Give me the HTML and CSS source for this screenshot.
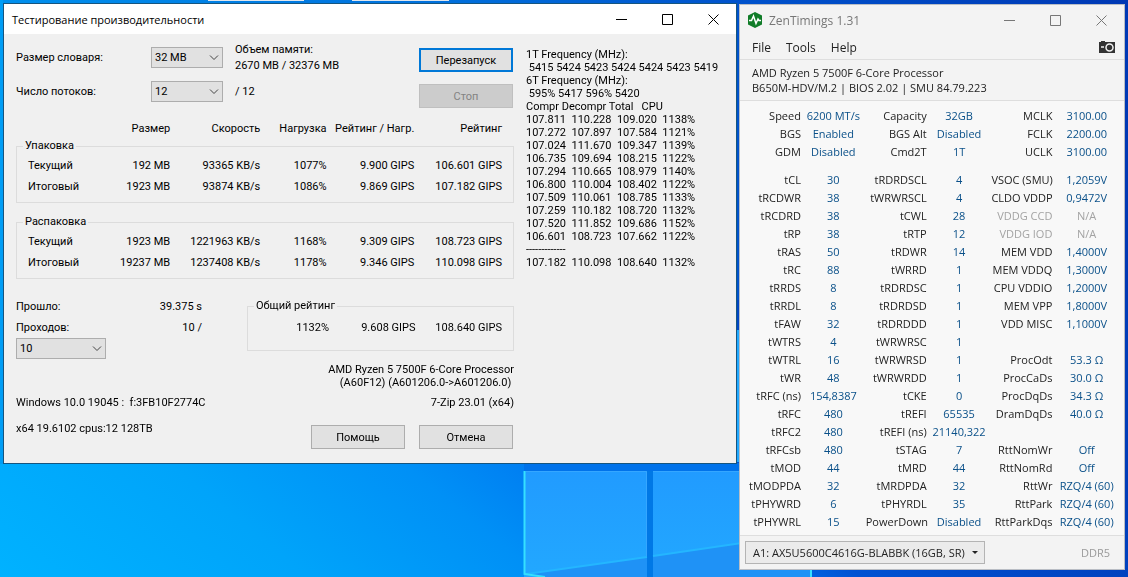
FILE: index.html
```html
<!DOCTYPE html>
<html lang="ru">
<head>
    <meta charset="UTF-8">
    <meta name="viewport" content="width=device-width, initial-scale=1.0">
    <title>Тестирование производительности</title>
    <link rel="stylesheet" href="styles.css">
</head>
<body>
    <!-- Wallpaper -->
    <svg class="wallpaper" viewBox="0 0 1128 577" preserveAspectRatio="none" aria-hidden="true">
        <defs>
            <linearGradient id="sky" x1="0" y1="0" x2="1" y2="0">
                <stop offset="0" stop-color="#0090ee"/>
                <stop offset="0.4" stop-color="#006fdc"/>
                <stop offset="0.66" stop-color="#0052cc"/>
                <stop offset="1" stop-color="#0038b4"/>
            </linearGradient>
            <linearGradient id="floor" x1="0" y1="1" x2="1" y2="0.7">
                <stop offset="0" stop-color="#00b2ff"/>
                <stop offset="0.25" stop-color="#00a4fa"/>
                <stop offset="0.44" stop-color="#0090f6"/>
                <stop offset="0.62" stop-color="#0070ee"/>
                <stop offset="0.7" stop-color="#0052d2"/>
                <stop offset="1" stop-color="#003cb8"/>
            </linearGradient>
            <linearGradient id="pane" x1="0" y1="0" x2="0" y2="1">
                <stop offset="0" stop-color="#219bff"/>
                <stop offset="1" stop-color="#22a8ff"/>
            </linearGradient>
        </defs>
        <rect width="1128" height="577" fill="url(#sky)"/>
        <rect y="300" width="1128" height="277" fill="url(#floor)"/>
        <rect width="3" height="464" fill="#009df5"/>
        <rect x="524" y="463" width="216" height="8" fill="#0072ea"/>
        <rect x="524" y="471" width="123" height="106" fill="url(#pane)"/>
        <rect x="653" y="471" width="158" height="106" fill="url(#pane)"/>
        <rect x="647" y="471" width="6" height="106" fill="#0078e6"/>
        <path d="M526 574 L647 557 V577 H540 Z M653 556 L811 533 V577 H653 Z" fill="#1f92f6"/>
        <path d="M526 574 L647 557 M653 556 L811 533" stroke="#24b6ff" stroke-width="2"/>
        <path d="M524.5 471 V574 L545 577 M811 471 V577" stroke="#35e0ff" stroke-width="2" fill="none"/>
        <path d="M526 471.5 H646.5 V556 M653 471.5 H811" stroke="#35a6ff" fill="none"/>
        <path d="M737 330 H740 V462 H737 Z" fill="#1fa8ff"/>
        <path d="M208 0 H304 V1 H208 Z M352 0 H449 V1 H352 Z" fill="#dfe6ee"/>
    </svg>

    <div class="desktop">
        <!-- 7-Zip benchmark -->
        <main class="bench">
            <header class="titlebar">
                <h1>Тестирование производительности</h1>
                <div class="window-buttons">
                    <button aria-label="Свернуть"><svg viewBox="0 0 11 11"><path d="M0 5.5H11"/></svg></button>
                    <button aria-label="Развернуть"><svg viewBox="0 0 11 11"><path d="M.5.5h10v10H.5z"/></svg></button>
                    <button aria-label="Закрыть"><svg viewBox="0 0 11 11"><path d="M.5.5l10 10M10.5.5l-10 10"/></svg></button>
                </div>
            </header>

            <div class="bench-body">
                <div class="bench-main">
                    <div class="settings">
                        <div class="options">
                            <label for="dict">Размер словаря:</label>
                            <select id="dict"><option>32 MB</option></select>
                            <p class="memory">Объем памяти:<br>2670 MB / 32376 MB</p>
                            <label for="threads">Число потоков:</label>
                            <select id="threads"><option>12</option></select>
                            <p>/ 12</p>
                        </div>
                        <div class="actions">
                            <button class="btn btn-default">Перезапуск</button>
                            <button class="btn" disabled>Стоп</button>
                        </div>
                    </div>

                    <table class="results results-head">
                        <thead>
                            <tr><th class="size">Размер</th><th class="speed">Скорость</th><th class="load">Нагрузка</th><th>Рейтинг / Нагр.</th><th>Рейтинг</th></tr>
                        </thead>
                    </table>
                    <fieldset>
                        <legend>Упаковка</legend>
                        <table class="results">
                            <tr><th class="name">Текущий</th><td class="amount">192 MB</td><td class="speed">93365 KB/s</td><td class="load">1077%</td><td>9.900 GIPS</td><td>106.601 GIPS</td></tr>
                            <tr><th class="name">Итоговый</th><td>1923 MB</td><td>93874 KB/s</td><td>1086%</td><td>9.869 GIPS</td><td>107.182 GIPS</td></tr>
                        </table>
                    </fieldset>
                    <fieldset>
                        <legend>Распаковка</legend>
                        <table class="results">
                            <tr><th class="name">Текущий</th><td class="amount">1923 MB</td><td class="speed">1221963 KB/s</td><td class="load">1168%</td><td>9.309 GIPS</td><td>108.723 GIPS</td></tr>
                            <tr><th class="name">Итоговый</th><td>19237 MB</td><td>1237408 KB/s</td><td>1178%</td><td>9.346 GIPS</td><td>110.098 GIPS</td></tr>
                        </table>
                    </fieldset>

                    <div class="totals">
                        <div class="progress">
                            <p><span>Прошло:</span><span>39.375 s</span></p>
                            <p><label for="passes">Проходов:</label><span>10 /</span></p>
                            <select id="passes"><option>10</option></select>
                        </div>
                        <fieldset class="total">
                            <legend>Общий рейтинг</legend>
                            <table class="results">
                                <tr><td class="total-load">1132%</td><td>9.608 GIPS</td><td>108.640 GIPS</td></tr>
                            </table>
                        </fieldset>
                    </div>

                    <p class="cpu">AMD Ryzen 5 7500F 6-Core Processor<br>(A60F12) (A601206.0-&gt;A601206.0)&nbsp;</p>
                    <div class="system">
                        <p>Windows 10.0 19045 :&nbsp; f:3FB10F2774C</p>
                        <p>7-Zip 23.01 (x64)</p>
                    </div>
                    <div class="bottom">
                        <p>x64 19.6102 cpus:12 128TB</p>
                        <button class="btn">Помощь</button>
                        <button class="btn">Отмена</button>
                    </div>
                </div>

                <pre class="log">1T Frequency (MHz):
 5415 5424 5423 5424 5424 5423 5419
6T Frequency (MHz):
 595% 5417 596% 5420
Compr Decompr Total   CPU
107.811  110.228  109.020  1138%
107.272  107.897  107.584  1121%
107.024  111.670  109.347  1139%
106.735  109.694  108.215  1122%
107.294  110.665  108.979  1140%
106.800  110.004  108.402  1122%
107.509  110.061  108.785  1133%
107.259  110.182  108.720  1132%
107.520  111.852  109.686  1152%
106.601  108.723  107.662  1122%
-------------
107.182  110.098  108.640  1132%</pre>
            </div>
        </main>

        <!-- ZenTimings -->
        <section class="zen">
            <header class="titlebar">
                <svg class="logo" viewBox="0 0 16 16" aria-hidden="true">
                    <path d="M8 0l7 3.500v9L8 16l-7-3.500v-9z" fill="#107c28"/>
                    <path d="M2 8.500h2.500L6.500 4l2.500 7.500 2-4.500 1 1.500h2" fill="none" stroke="#fff" stroke-width="1.500"/>
                </svg>
                <h2>ZenTimings 1.31</h2>
                <div class="window-buttons">
                    <button aria-label="Minimize"><svg viewBox="0 0 11 11"><path d="M0 5.5H11"/></svg></button>
                    <button aria-label="Maximize"><svg viewBox="0 0 11 11"><path d="M.5.5h10v10H.5z"/></svg></button>
                    <button aria-label="Close"><svg viewBox="0 0 11 11"><path d="M.5.5l10 10M10.5.5l-10 10"/></svg></button>
                </div>
            </header>
            <nav class="menu">
                <button>File</button>
                <button>Tools</button>
                <button>Help</button>
                <button class="camera" aria-label="Screenshot">
                    <svg viewBox="0 0 16 12">
                        <path d="M0 1h2V0h4v1h10v11H0z" fill="#333"/>
                        <circle cx="10.500" cy="6.500" r="3.500" fill="none" stroke="#f3f3f3" stroke-width="1.500"/>
                        <path d="M2 6h3" stroke="#f3f3f3" stroke-width="1.500"/>
                    </svg>
                </button>
            </nav>
            <p class="board">AMD Ryzen 5 7500F 6-Core Processor<br>B650M-HDV/M.2 | BIOS 2.02 | SMU 84.79.223</p>
            <table class="timings">
                <colgroup>
                    <col class="col-label"><col class="col-value"><col class="col-label"><col class="col-value"><col class="col-label"><col>
                </colgroup>
                <tbody>
                    <tr><th>Speed</th><td>6200 MT/s</td><th>Capacity</th><td>32GB</td><th>MCLK</th><td>3100.00</td></tr>
                    <tr><th>BGS</th><td>Enabled</td><th>BGS Alt</th><td>Disabled</td><th>FCLK</th><td>2200.00</td></tr>
                    <tr><th>GDM</th><td>Disabled</td><th>Cmd2T</th><td>1T</td><th>UCLK</th><td>3100.00</td></tr>
                    <tr class="spacer"><td colspan="6"></td></tr>
                    <tr><th>tCL</th><td>30</td><th>tRDRDSCL</th><td>4</td><th>VSOC (SMU)</th><td>1,2059V</td></tr>
                    <tr><th>tRCDWR</th><td>38</td><th>tWRWRSCL</th><td>4</td><th>CLDO VDDP</th><td>0,9472V</td></tr>
                    <tr><th>tRCDRD</th><td>38</td><th>tCWL</th><td>28</td><th class="off">VDDG CCD</th><td class="off">N/A</td></tr>
                    <tr><th>tRP</th><td>38</td><th>tRTP</th><td>12</td><th class="off">VDDG IOD</th><td class="off">N/A</td></tr>
                    <tr><th>tRAS</th><td>50</td><th>tRDWR</th><td>14</td><th>MEM VDD</th><td>1,4000V</td></tr>
                    <tr><th>tRC</th><td>88</td><th>tWRRD</th><td>1</td><th>MEM VDDQ</th><td>1,3000V</td></tr>
                    <tr><th>tRRDS</th><td>8</td><th>tRDRDSC</th><td>1</td><th>CPU VDDIO</th><td>1,2000V</td></tr>
                    <tr><th>tRRDL</th><td>8</td><th>tRDRDSD</th><td>1</td><th>MEM VPP</th><td>1,8000V</td></tr>
                    <tr><th>tFAW</th><td>32</td><th>tRDRDDD</th><td>1</td><th>VDD MISC</th><td>1,1000V</td></tr>
                    <tr><th>tWTRS</th><td>4</td><th>tWRWRSC</th><td>1</td><th></th><td></td></tr>
                    <tr><th>tWTRL</th><td>16</td><th>tWRWRSD</th><td>1</td><th>ProcOdt</th><td>53.3 Ω</td></tr>
                    <tr><th>tWR</th><td>48</td><th>tWRWRDD</th><td>1</td><th>ProcCaDs</th><td>30.0 Ω</td></tr>
                    <tr><th>tRFC (ns)</th><td>154,8387</td><th>tCKE</th><td>0</td><th>ProcDqDs</th><td>34.3 Ω</td></tr>
                    <tr><th>tRFC</th><td>480</td><th>tREFI</th><td>65535</td><th>DramDqDs</th><td>40.0 Ω</td></tr>
                    <tr><th>tRFC2</th><td>480</td><th>tREFI (ns)</th><td>21140,322</td><th></th><td></td></tr>
                    <tr><th>tRFCsb</th><td>480</td><th>tSTAG</th><td>7</td><th>RttNomWr</th><td>Off</td></tr>
                    <tr><th>tMOD</th><td>44</td><th>tMRD</th><td>44</td><th>RttNomRd</th><td>Off</td></tr>
                    <tr><th>tMODPDA</th><td>32</td><th>tMRDPDA</th><td>32</td><th>RttWr</th><td>RZQ/4 (60)</td></tr>
                    <tr><th>tPHYWRD</th><td>6</td><th>tPHYRDL</th><td>35</td><th>RttPark</th><td>RZQ/4 (60)</td></tr>
                    <tr><th>tPHYWRL</th><td>15</td><th>PowerDown</th><td>Disabled</td><th>RttParkDqs</th><td>RZQ/4 (60)</td></tr>
                </tbody>
            </table>
            <footer class="statusbar">
                <select class="module" aria-label="Memory module"><option>A1: AX5U5600C4616G-BLABBK (16GB, SR)</option></select>
                <span>DDR5</span>
            </footer>
        </section>
    </div>
</body>
</html>
```
FILE: styles.css
```css
* {
    box-sizing: border-box;
}
body {
    margin: 0;
    min-height: 100vh;
    background-color: #0078d7;
}
h1, h2, p, pre, fieldset {
    margin: 0;
}
button, select {
    font: inherit;
    color: inherit;
}
.wallpaper {
    position: fixed;
    inset: 0;
    width: 100%;
    height: 100%;
}
.desktop {
    position: relative;
    display: grid;
    grid-template-columns: 734fr 386fr;
    gap: 2px;
    align-items: start;
    padding: 3px;
}

/* Title bars */
.titlebar {
    display: flex;
    align-items: center;
    height: 30px;
}
.titlebar h1, .titlebar h2 {
    flex: 1;
    font-weight: normal;
}
.titlebar h1 {
    font-size: 11px;
}
.titlebar h2 {
    font-size: 12px;
}
.window-buttons {
    display: flex;
}
.window-buttons button {
    display: flex;
    justify-content: center;
    width: 46px;
    padding: 0;
    border: none;
    background: none;
}
.window-buttons svg {
    width: 11px;
    height: 11px;
    fill: none;
    stroke: currentColor;
}

/* 7-Zip benchmark */
.bench {
    border: 1px solid #16557f;
    background-color: #f0f0f0;
    color: #000;
    font: 11px/13px Roboto, sans-serif;
}
.bench .titlebar {
    padding-left: 8px;
    background-color: #fff;
    font-family: "Open Sans", sans-serif;
}
.bench-body {
    display: grid;
    grid-template-columns: 498fr 198fr;
    gap: 12px;
    padding: 13px 12px 14px;
}
.settings {
    display: flex;
    justify-content: space-between;
}
.options {
    display: grid;
    grid-template-columns: 123px 72px 1fr;
    grid-auto-rows: 21px;
    gap: 13px 12px;
    align-items: center;
}
.memory {
    line-height: 16px;
}
.actions {
    display: grid;
    gap: 12px;
    padding-top: 1px;
    margin-right: 1px;
}
.btn {
    width: 94px;
    height: 24px;
    padding: 0;
    border: 1px solid #adadad;
    background-color: #e1e1e1;
}
.btn-default {
    border: 2px solid #0078d7;
}
.btn:disabled {
    border-color: #bfbfbf;
    background-color: #ccc;
    color: #838383;
}
.bench select {
    appearance: none;
    width: 72px;
    height: 21px;
    padding: 0 3px;
    border: 1px solid #adadad;
    border-radius: 0;
    background: #e1e1e1 url("data:image/svg+xml,%3Csvg xmlns='http://www.w3.org/2000/svg' width='10' height='6'%3E%3Cpath d='M1 .5l4 4 4-4' fill='none' stroke='%23444'/%3E%3C/svg%3E") no-repeat right 3px center;
}
fieldset {
    min-width: 0;
    padding: 2px 11px 5px;
    border: 1px solid #dcdcdc;
}
fieldset + fieldset {
    margin-top: 12px;
}
legend {
    height: 14px;
    margin-left: -5px;
    padding: 0 2px;
}
.results {
    width: 100%;
    table-layout: fixed;
    border-collapse: collapse;
}
.results th, .results td {
    height: 21px;
    padding: 0;
    font-weight: normal;
    text-align: right;
    white-space: nowrap;
}
.results-head {
    margin-top: 10px;
    padding: 0 12px;
    border-collapse: separate;
    border-spacing: 0;
}
.results .size {
    width: 30%;
}
.results .name {
    width: 15%;
    text-align: left;
}
.results .amount {
    width: 15%;
}
.results .speed {
    width: 19%;
}
.results .load {
    width: 14%;
}
.totals {
    display: flex;
    justify-content: space-between;
    align-items: flex-end;
    margin-top: 17px;
}
.progress {
    width: 186px;
}
.progress p {
    display: flex;
    justify-content: space-between;
    height: 21px;
    padding-top: 4px;
}
.progress select {
    display: block;
    width: 90px;
}
.total {
    width: 267px;
    height: 52px;
    margin-bottom: 8px;
    padding-top: 4px;
}
.results .total-load {
    width: 70px;
}
.cpu {
    margin-top: 4px;
    text-align: right;
}
.system {
    display: flex;
    justify-content: space-between;
    margin-top: 7px;
}
.bottom {
    display: flex;
    align-items: flex-end;
    gap: 14px;
    margin: 13px 1px 0 0;
}
.bottom p {
    flex: 1;
    height: 27px;
}
.log {
    padding-top: 1px;
    font: inherit;
}

/* ZenTimings */
.zen {
    margin-top: 1px;
    border: 1px solid #b9bdc4;
    background-color: #f3f3f3;
    color: #222;
    font: 11px/15px "Open Sans", sans-serif;
}
.zen .titlebar {
    gap: 6px;
    padding-left: 7px;
    color: #777;
}
.logo {
    width: 16px;
    height: 16px;
}
.menu {
    display: flex;
    align-items: center;
    gap: 15px;
    height: 25px;
    padding: 0 9px 0 12px;
    border-bottom: 1px solid #dedede;
    font-size: 12px;
}
.menu button {
    padding: 0;
    border: none;
    background: none;
}
.menu .camera {
    display: flex;
    margin-left: auto;
}
.camera svg {
    width: 16px;
    height: 12px;
}
.board {
    padding: 5px 12px;
    border-bottom: 1px solid #dedede;
}
.timings {
    width: 100%;
    padding: 5px 3px 5px 0;
    table-layout: fixed;
    border-spacing: 0;
    background-color: #f8f8f8;
}
.timings .col-label {
    width: 16%;
}
.timings .col-value {
    width: 17%;
}
.timings th, .timings td {
    height: 18px;
    padding: 0;
    white-space: nowrap;
}
.timings th {
    font-weight: normal;
    text-align: right;
}
.timings td {
    color: #0a5089;
    text-align: center;
}
.timings .spacer td {
    height: 10px;
}
.timings .off {
    color: #a3a3a3;
}
.statusbar {
    display: flex;
    align-items: center;
    justify-content: space-between;
    height: 34px;
    padding: 0 14px 0 5px;
    border-top: 1px solid #dedede;
    color: #9a9a9a;
}
.module {
    appearance: none;
    width: 240px;
    height: 23px;
    padding: 0 7px;
    border: 1px solid #b4b4b4;
    border-radius: 0;
    background: #ebebeb url("data:image/svg+xml,%3Csvg xmlns='http://www.w3.org/2000/svg' width='6' height='4'%3E%3Cpath d='M0 0h6L3 3z' fill='%23222'/%3E%3C/svg%3E") no-repeat right 6px center;
    color: #222;
}
```
